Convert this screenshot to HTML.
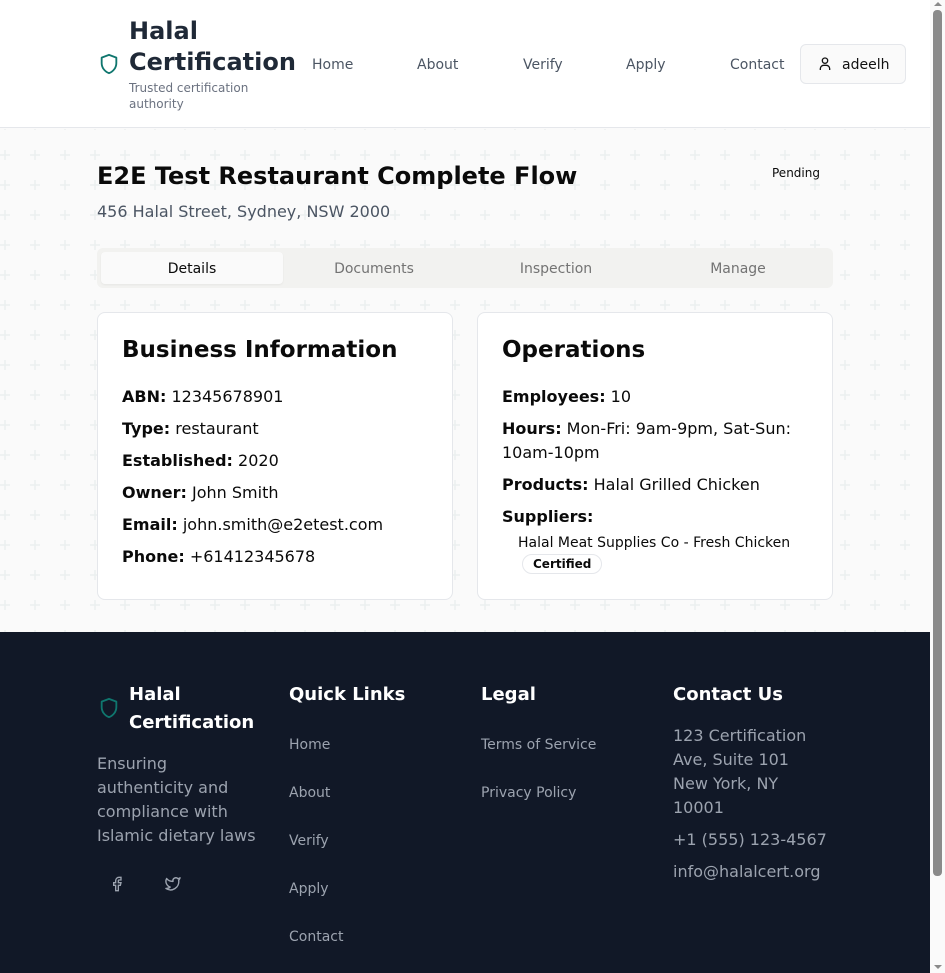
<!DOCTYPE html>
<html><head><meta charset="utf-8"><style>
*{box-sizing:border-box;margin:0;padding:0}
body{width:945px;height:973px;overflow:hidden;font-family:"DejaVu Sans","Liberation Sans",sans-serif;background:#fafafa;position:relative;color:#0a0a0a}
.abs{position:absolute}
header{position:absolute;left:0;top:0;width:930px;height:128px;background:#fff;border-bottom:1px solid #e5e7eb}
.nav{position:absolute;top:57px;font-size:14px;color:#4b5563}
main{position:absolute;left:0;top:129px;width:930px;height:503px;background-color:#fafafa;
background-image:url("data:image/svg+xml,%3Csvg xmlns='http://www.w3.org/2000/svg' width='30' height='30'%3E%3Cpath d='M15 10v10M10 15h10' stroke='%23ebf0f0' stroke-width='1.5'/%3E%3C/svg%3E");background-position:-10px 11px}
.card{position:absolute;top:312px;width:356px;height:288px;background:#fff;border:1px solid #e5e7eb;border-radius:8px}
.card h2{position:absolute;left:24px;top:24px;font-size:23px;font-weight:bold}
.row{position:absolute;left:24px;font-size:16px;line-height:24px}
.row b{font-weight:bold}
footer{position:absolute;left:0;top:632px;width:930px;height:341px;background:#111827;color:#fff}
footer h3{position:absolute;font-size:18px;font-weight:bold;top:52px}
.fl{position:absolute;font-size:14px;color:#9ca3af}
.fc{position:absolute;font-size:16px;color:#9ca3af;line-height:24px}
</style></head><body>
<header>
<svg class="abs" style="left:98px;top:52px" width="22" height="24" viewBox="0 0 24 24" fill="none" stroke="#0f766e" stroke-width="2" stroke-linejoin="round"><path d="M12 2 4 5v6c0 5 3.4 9.3 8 11 4.6-1.7 8-6 8-11V5z"/></svg>
<div class="abs" style="left:129px;top:16px;font-size:24px;font-weight:bold;line-height:31px;color:#1f2937">Halal<br>Certification</div>
<div class="abs" style="left:129px;top:80px;font-size:12px;line-height:16px;color:#6b7280">Trusted certification<br>authority</div>
<div class="nav" style="left:312px">Home</div>
<div class="nav" style="left:417px">About</div>
<div class="nav" style="left:523px">Verify</div>
<div class="nav" style="left:626px">Apply</div>
<div class="nav" style="left:730px">Contact</div>
<div class="abs" style="left:800px;top:44px;width:106px;height:40px;border:1px solid #e5e7eb;border-radius:6px;background:#fafafa;font-size:14px;color:#111">
<svg class="abs" style="left:16px;top:11px" width="16" height="16" viewBox="0 0 24 24" fill="none" stroke="#111" stroke-width="2"><circle cx="12" cy="7" r="4"/><path d="M5 21v-2a5 5 0 0 1 5-5h4a5 5 0 0 1 5 5v2"/></svg>
<span class="abs" style="left:41px;top:12px">adeelh</span></div>
</header>
<main></main>
<div class="abs" style="left:97px;top:162px;font-size:24px;font-weight:bold">E2E Test Restaurant Complete Flow</div>
<div class="abs" style="left:772px;top:166px;font-size:12px">Pending</div>
<div class="abs" style="left:97px;top:202px;font-size:16px;color:#4b5563">456 Halal Street, Sydney, NSW 2000</div>
<div class="abs" style="left:97px;top:248px;width:736px;height:40px;background:#f2f2f0;border-radius:6px"></div>
<div class="abs" style="left:101px;top:252px;width:182px;height:32px;background:#fafafa;border-radius:4px;box-shadow:0 1px 2px rgba(0,0,0,.05)"></div>
<div class="abs" style="left:101px;top:261px;width:182px;text-align:center;font-size:14px">Details</div>
<div class="abs" style="left:283px;top:261px;width:182px;text-align:center;font-size:14px;color:#737373">Documents</div>
<div class="abs" style="left:465px;top:261px;width:182px;text-align:center;font-size:14px;color:#737373">Inspection</div>
<div class="abs" style="left:647px;top:261px;width:182px;text-align:center;font-size:14px;color:#737373">Manage</div>
<div class="card" style="left:97px"><h2>Business Information</h2>
<div class="row" style="top:72px"><b>ABN:</b> 12345678901</div>
<div class="row" style="top:104px"><b>Type:</b> restaurant</div>
<div class="row" style="top:136px"><b>Established:</b> 2020</div>
<div class="row" style="top:168px"><b>Owner:</b> John Smith</div>
<div class="row" style="top:200px"><b>Email:</b> john.smith@e2etest.com</div>
<div class="row" style="top:232px"><b>Phone:</b> +61412345678</div>
</div>
<div class="card" style="left:477px"><h2>Operations</h2>
<div class="row" style="top:72px"><b>Employees:</b> 10</div>
<div class="row" style="top:104px;width:310px"><b>Hours:</b> Mon-Fri: 9am-9pm, Sat-Sun: 10am-10pm</div>
<div class="row" style="top:160px"><b>Products:</b> Halal Grilled Chicken</div>
<div class="row" style="top:192px"><b>Suppliers:</b></div>
<div class="abs" style="left:40px;top:222px;font-size:14px">Halal Meat Supplies Co - Fresh Chicken</div>
<div class="abs" style="left:44px;top:241px;padding:2px 10px;border:1px solid #e5e7eb;border-radius:10px;font-size:12px;font-weight:bold">Certified</div>
</div>
<footer>
<svg class="abs" style="left:98px;top:64px" width="22" height="24" viewBox="0 0 24 24" fill="none" stroke="#0f766e" stroke-width="2" stroke-linejoin="round"><path d="M12 2 4 5v6c0 5 3.4 9.3 8 11 4.6-1.7 8-6 8-11V5z"/></svg>
<div class="abs" style="left:129px;top:49px;font-size:18px;font-weight:bold;line-height:28px">Halal<br>Certification</div>
<div class="fc" style="left:97px;top:120px;width:170px">Ensuring authenticity and compliance with Islamic dietary laws</div>
<svg class="abs" style="left:109px;top:243px" width="16" height="18" viewBox="0 0 24 24" fill="none" stroke="#9ca3af" stroke-width="2"><path d="M18 2h-3a5 5 0 0 0-5 5v3H7v4h3v8h4v-8h3l1-4h-4V7a1 1 0 0 1 1-1h3z"/></svg>
<svg class="abs" style="left:164px;top:243px" width="18" height="17" viewBox="0 0 24 24" fill="none" stroke="#9ca3af" stroke-width="2" stroke-linejoin="round"><path d="M22 4s-.7 2.1-2 3.4c1.6 10-9.4 17.3-18 11.6 2.2.1 4.4-.6 6-2C3 15.5.5 9.6 3 5c2.2 2.6 5.6 4.1 9 4-.9-4.2 4-6.6 7-3.8 1.1 0 3-1.2 3-1.2z"/></svg>
<h3 style="left:289px">Quick Links</h3>
<div class="fl" style="left:289px;top:105px">Home</div>
<div class="fl" style="left:289px;top:153px">About</div>
<div class="fl" style="left:289px;top:201px">Verify</div>
<div class="fl" style="left:289px;top:249px">Apply</div>
<div class="fl" style="left:289px;top:297px">Contact</div>
<h3 style="left:481px">Legal</h3>
<div class="fl" style="left:481px;top:105px">Terms of Service</div>
<div class="fl" style="left:481px;top:153px">Privacy Policy</div>
<h3 style="left:673px">Contact Us</h3>
<div class="fc" style="left:673px;top:92px;width:150px">123 Certification Ave, Suite 101 New York, NY 10001</div>
<div class="fc" style="left:673px;top:196px">+1 (555) 123-4567</div>
<div class="fc" style="left:673px;top:228px">info@halalcert.org</div>
</footer>
<div class="abs" style="left:930px;top:0;width:15px;height:973px;background:#fafafa"></div>
<div class="abs" style="left:933px;top:10px;width:9px;height:866px;background:#8a8a8a;border-radius:4px"></div>
<div class="abs" style="left:934px;top:2px;width:0;height:0;border-left:4px solid transparent;border-right:4px solid transparent;border-bottom:4px solid #8a8a8a"></div>
<div class="abs" style="left:934px;top:965px;width:0;height:0;border-left:4px solid transparent;border-right:4px solid transparent;border-top:4px solid #8a8a8a"></div>
</body></html>
